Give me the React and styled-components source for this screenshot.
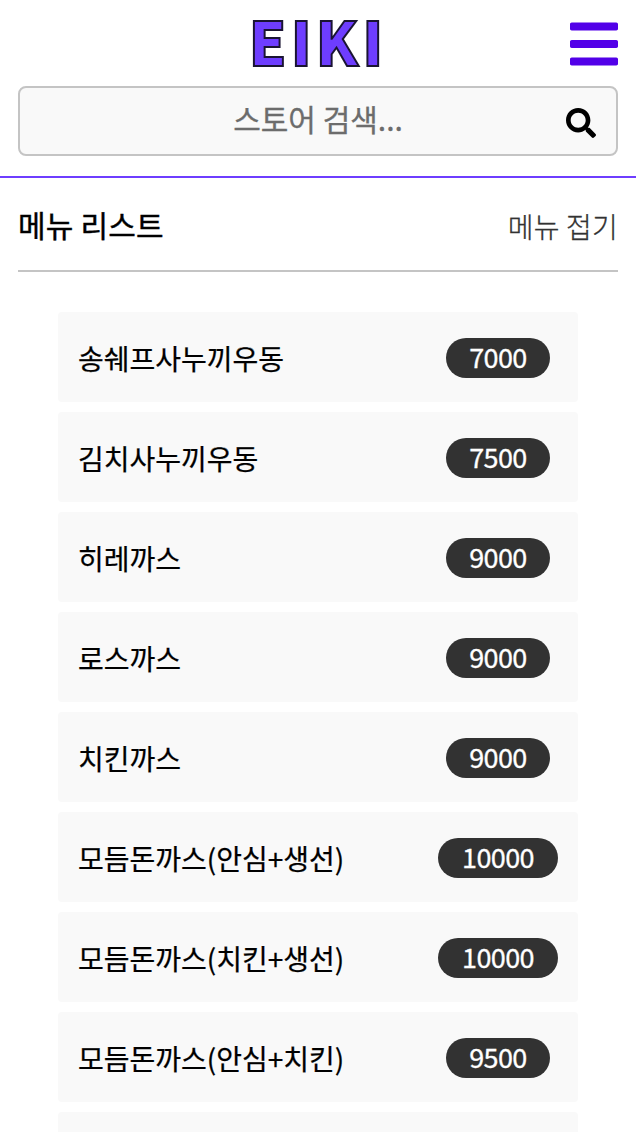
import React from "react";
import styled, { createGlobalStyle } from "styled-components";
import { FaBars, FaSearch } from "react-icons/fa";

const GlobalStyle = createGlobalStyle`
  * { box-sizing: border-box; }
  body {
    margin: 0;
    background: #fff;
    color: #000;
    font-family: "Noto Sans CJK KR", "Noto Sans", sans-serif;
  }
`;

const Page = styled.div`
  width: 100%;
  min-height: 1132px;
  height: 1132px;
  overflow: hidden;
`;

const Header = styled.header`
  height: 178px;
  padding: 0 18px;
  border-bottom: 2px solid #6e3dff;
`;

const TopBar = styled.div`
  height: 86px;
  display: grid;
  grid-template-columns: 1fr auto 1fr;
  align-items: center;
`;

const Logo = styled.h1`
  grid-column: 2;
  margin: 0;
  padding: 0 0 6px;
  font-size: 60px;
  line-height: 80px;
  font-weight: 900;
  letter-spacing: 4px;
  color: #6e3dff;
  -webkit-text-stroke: 2px #1a1433;
`;

const MenuButton = styled.button`
  justify-self: end;
  display: flex;
  padding: 2px 0 0;
  border: 0;
  background: none;
  color: #5200e8;

  svg {
    width: 48px;
    height: 56px;
  }
`;

const SearchBox = styled.div`
  height: 70px;
  display: flex;
  align-items: center;
  padding-right: 20px;
  border: 2px solid #c4c4c4;
  border-radius: 8px;
  background: #f9f9f9;

  svg {
    width: 30px;
    height: 30px;
    margin-top: 4px;
  }
`;

const SearchInput = styled.input`
  flex: 1;
  min-width: 0;
  height: 100%;
  padding: 0 0 6px 50px;
  border: 0;
  outline: 0;
  background: transparent;
  text-align: center;
  font: 400 30px "Noto Sans CJK KR", sans-serif;

  &::placeholder {
    color: #6c6c6c;
    -webkit-text-stroke: 0.3px #6c6c6c;
  }
`;

const ListHeader = styled.div`
  height: 94px;
  margin: 0 18px;
  padding-top: 2px;
  display: flex;
  align-items: center;
  justify-content: space-between;
  border-bottom: 2px solid #c4c4c4;
`;

const ListTitle = styled.h2`
  margin: 0;
  padding: 0 0 2px;
  font-size: 30px;
  line-height: 44px;
  font-weight: 400;
  letter-spacing: 0.2px;
  -webkit-text-stroke: 0.4px #000;
`;

const FoldButton = styled.button`
  padding: 2px 0 0;
  border: 0;
  background: none;
  color: #323232;
  font: 300 28px/40px "Noto Sans CJK KR", sans-serif;
  letter-spacing: 0.2px;
  -webkit-text-stroke: 0.3px #323232;
`;

const MenuList = styled.ul`
  margin: 40px 58px 0;
  padding: 0;
  display: flex;
  flex-direction: column;
  gap: 10px;
  list-style: none;
`;

const MenuItem = styled.li`
  height: 90px;
  padding-left: 20px;
  display: grid;
  grid-template-columns: 1fr 160px;
  align-items: center;
  border-radius: 4px;
  background: #f9f9f9;
`;

const MenuName = styled.span`
  padding-top: 2px;
  font-size: 28px;
  line-height: 40px;
  font-weight: 400;
  -webkit-text-stroke: 0.25px #000;
`;

const Price = styled.span`
  justify-self: center;
  width: ${({ $wide }) => ($wide ? 120 : 104)}px;
  height: 40px;
  margin-top: 2px;
  border-radius: 20px;
  background: #323232;
  color: #fff;
  text-align: center;
  font-size: 27px;
  line-height: 38px;
  font-weight: 400;
  letter-spacing: -0.6px;
  -webkit-text-stroke: 0.3px #fff;
`;

const items = [
  ["송쉐프사누끼우동", 7000],
  ["김치사누끼우동", 7500],
  ["히레까스", 9000],
  ["로스까스", 9000],
  ["치킨까스", 9000],
  ["모듬돈까스(안심+생선)", 10000],
  ["모듬돈까스(치킨+생선)", 10000],
  ["모듬돈까스(안심+치킨)", 9500],
];

export default function App() {
  return (
    <Page>
      <GlobalStyle />
      <Header>
        <TopBar>
          <Logo>EIKI</Logo>
          <MenuButton aria-label="메뉴">
            <FaBars preserveAspectRatio="none" />
          </MenuButton>
        </TopBar>
        <SearchBox>
          <SearchInput placeholder="스토어 검색..." />
          <FaSearch />
        </SearchBox>
      </Header>
      <ListHeader>
        <ListTitle>메뉴 리스트</ListTitle>
        <FoldButton>메뉴 접기</FoldButton>
      </ListHeader>
      <MenuList>
        {items.map(([name, price]) => (
          <MenuItem key={name}>
            <MenuName>{name}</MenuName>
            <Price $wide={price >= 10000}>{price}</Price>
          </MenuItem>
        ))}
        <MenuItem />
      </MenuList>
    </Page>
  );
}
